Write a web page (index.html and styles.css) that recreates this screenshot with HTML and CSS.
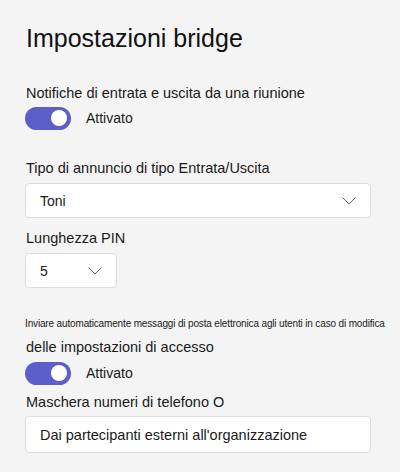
FILE: index.html
```html
<!DOCTYPE html>
<html lang="it">
<head>
<meta charset="utf-8">
<link rel="stylesheet" href="styles.css">
</head>
<body>
<div class="panel">
  <h1 class="title">Impostazioni bridge</h1>

  <div class="label l-notify">Notifiche di entrata e uscita da una riunione</div>
  <div class="toggle-row">
    <span class="toggle"><span class="knob"></span></span>
    <span class="toggle-text">Attivato</span>
  </div>

  <div class="label l-type">Tipo di annuncio di tipo Entrata/Uscita</div>
  <div class="select wide">
    <span>Toni</span>
    <svg class="chev" width="14" height="8" viewBox="0 0 14 8"><path d="M0.5 0.5 L7 7 L13.5 0.5" fill="none" stroke="#616161" stroke-width="1"/></svg>
  </div>

  <div class="label l-pin">Lunghezza PIN</div>
  <div class="select narrow">
    <span>5</span>
    <svg class="chev" width="14" height="8" viewBox="0 0 14 8"><path d="M0.5 0.5 L7 7 L13.5 0.5" fill="none" stroke="#616161" stroke-width="1"/></svg>
  </div>

  <div class="small">Inviare automaticamente messaggi di posta elettronica agli utenti in caso di modifica</div>
  <div class="label l-access">delle impostazioni di accesso</div>
  <div class="toggle-row t2">
    <span class="toggle"><span class="knob"></span></span>
    <span class="toggle-text">Attivato</span>
  </div>

  <div class="label l-mask">Maschera numeri di telefono O</div>
  <div class="select wide field">
    <span>Dai partecipanti esterni all'organizzazione</span>
  </div>
</div>
</body>
</html>
```

FILE: styles.css
```css
html, body {
  margin: 0;
  padding: 0;
  background: #f4f4f4;
}
body {
  font-family: "Liberation Sans", Arial, sans-serif;
  color: #1a1a1a;
  width: 400px;
  height: 472px;
  overflow: hidden;
}
.panel {
  padding: 0 0 0 25px;
  display: flex;
  flex-direction: column;
  align-items: flex-start;
}
.title {
  font-weight: normal;
  font-size: 25px;
  line-height: 30px;
  margin: 23px 0 0 1px;
  color: #111;
}
.label {
  font-size: 14.5px;
  line-height: 18px;
  margin-left: 1px;
}
.l-notify { margin-top: 31px; }
.toggle-row {
  display: flex;
  align-items: center;
  gap: 15px;
  margin-top: 4px;
  height: 24px;
}
.toggle {
  width: 46px;
  height: 23px;
  border-radius: 12px;
  background: #5b5fc7;
  position: relative;
  box-sizing: border-box;
}
.knob {
  position: absolute;
  right: 4px;
  top: 3.5px;
  width: 16px;
  height: 16px;
  border-radius: 50%;
  background: #fff;
}
.toggle-text {
  font-size: 14px;
}
.l-type { margin-top: 29px; }
.select {
  box-sizing: border-box;
  height: 35px;
  background: #fff;
  border: 1px solid #dcdcdc;
  border-radius: 4px;
  display: flex;
  align-items: center;
  justify-content: space-between;
  padding: 0 14px 0 14px;
  font-size: 14px;
  margin-top: 6px;
}
.wide { width: 346px; }
.narrow { width: 92px; }
.chev { flex: none; }
.l-pin { margin-top: 11px; }
.small {
  font-size: 10px;
  line-height: 12px;
  margin-top: 30px;
  letter-spacing: -0.15px;
  white-space: nowrap;
}
.l-access { margin-top: 8px; }
.t2 { margin-top: 5px; }
.l-mask { margin-top: 8px; }
.field {
  height: 37px;
  margin-top: 5px;
  font-size: 14.5px;
}
```
